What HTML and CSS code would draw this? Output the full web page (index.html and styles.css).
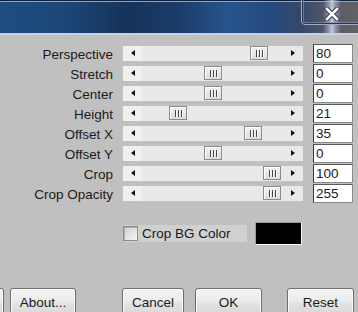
FILE: index.html
```html
<!DOCTYPE html>
<html>
<head>
<meta charset="utf-8">
<link rel="stylesheet" href="styles.css">
</head>
<body>
<div class="titlebar">
  <div class="glow"></div>
  <div class="close">
    <svg class="xicon" width="16" height="14" viewBox="0 0 16 14">
      <path d="M3 2 L13 12 M13 2 L3 12" stroke="#3a4256" stroke-width="4.6" stroke-linecap="square"/>
      <path d="M3 2 L13 12 M13 2 L3 12" stroke="#ffffff" stroke-width="2.6" stroke-linecap="square"/>
    </svg>
  </div>
</div>
<div class="params">
  <div class="lbl">Perspective</div>
  <div class="track"><span class="arr left"></span><span class="thumb" style="left:127px"><i></i><i></i><i></i></span><span class="arr right"></span></div>
  <div class="val">80</div>

  <div class="lbl">Stretch</div>
  <div class="track"><span class="arr left"></span><span class="thumb" style="left:81px"><i></i><i></i><i></i></span><span class="arr right"></span></div>
  <div class="val">0</div>

  <div class="lbl">Center</div>
  <div class="track"><span class="arr left"></span><span class="thumb" style="left:81px"><i></i><i></i><i></i></span><span class="arr right"></span></div>
  <div class="val">0</div>

  <div class="lbl">Height</div>
  <div class="track"><span class="arr left"></span><span class="thumb" style="left:46px"><i></i><i></i><i></i></span><span class="arr right"></span></div>
  <div class="val">21</div>

  <div class="lbl">Offset X</div>
  <div class="track"><span class="arr left"></span><span class="thumb" style="left:121px"><i></i><i></i><i></i></span><span class="arr right"></span></div>
  <div class="val">35</div>

  <div class="lbl">Offset Y</div>
  <div class="track"><span class="arr left"></span><span class="thumb" style="left:81px"><i></i><i></i><i></i></span><span class="arr right"></span></div>
  <div class="val">0</div>

  <div class="lbl">Crop</div>
  <div class="track"><span class="arr left"></span><span class="thumb" style="left:140px"><i></i><i></i><i></i></span><span class="arr right"></span></div>
  <div class="val">100</div>

  <div class="lbl">Crop Opacity</div>
  <div class="track"><span class="arr left"></span><span class="thumb" style="left:140px"><i></i><i></i><i></i></span><span class="arr right"></span></div>
  <div class="val">255</div>
</div>
<div class="bgrow">
  <div class="check"><span class="cbox"></span><span class="ctext">Crop BG Color</span></div>
  <div class="swatch"></div>
</div>
<div class="buttons">
  <div class="btn ghost"></div>
  <div class="btn about">About...</div>
  <div class="btn cancel">Cancel</div>
  <div class="btn ok">OK</div>
  <div class="btn reset">Reset</div>
</div>
</body>
</html>
```

FILE: styles.css
```css
* { box-sizing: border-box; }
html, body { margin: 0; padding: 0; }
body {
  background: #c0c0c0;
  font-family: "Liberation Sans", Arial, sans-serif;
  font-size: 13.5px;
  color: #1a1a1a;
  width: 358px;
  height: 312px;
  overflow: hidden;
}
.titlebar {
  position: relative;
  height: 35px;
  background: linear-gradient(90deg, #1f4c80 0%, #1d4778 18%, #163359 36%, #1b3d6a 50%, #27548d 64%, #24497c 76%, #364869 84%, #56596a 92%, #626265 100%);
  box-shadow: inset 0 1px 0 #0f2240, inset 0 2px 0 #8fa2c0, inset 0 -2px 0 #c9d1dd;
  overflow: hidden;
}
.glow {
  position: absolute;
  left: 323px;
  top: 0;
  width: 18px;
  height: 33px;
  background: linear-gradient(90deg, rgba(200,210,235,0) 0%, rgba(200,210,235,0.55) 35%, rgba(225,230,245,0.8) 50%, rgba(200,210,235,0.55) 65%, rgba(200,210,235,0) 100%);
}
.close {
  position: absolute;
  left: 301px;
  top: -6px;
  width: 70px;
  height: 31px;
  border: 1px solid #a3acbf;
  border-radius: 4px;
  box-shadow: inset 0 0 0 1px #2c3550, inset 0 0 0 2px rgba(140,150,175,0.6);
}
.xicon {
  position: absolute;
  left: 22px;
  top: 12px;
}
.params {
  margin-top: 9px;
  display: grid;
  grid-template-columns: 113px 180px 40px;
  grid-auto-rows: 20px;
  column-gap: 10px;
  align-items: start;
}
.lbl {
  text-align: right;
  line-height: 20px;
  padding-top: 1px;
  white-space: nowrap;
}
.track {
  position: relative;
  margin-top: 2px;
  height: 15px;
  background: linear-gradient(90deg, #f0f0f0 0px, #f0f0f0 18px, #e9e9e9 19px, #e9e9e9 100%);
}
.arr {
  position: absolute;
  top: 4px;
  width: 0;
  height: 0;
  border-top: 3.5px solid transparent;
  border-bottom: 3.5px solid transparent;
}
.arr.left { left: 8px; border-right: 4px solid #111; }
.arr.right { left: 168px; border-left: 4px solid #111; }
.thumb {
  position: absolute;
  top: 0;
  width: 18px;
  height: 14px;
  background: linear-gradient(#f2f2f2, #dcdcdc);
  border: 1px solid #8c8c8c;
  box-shadow: inset 1px 1px 0 #ffffff;
  display: flex;
  justify-content: center;
  align-items: center;
  gap: 2px;
}
.thumb i {
  display: block;
  width: 1px;
  height: 7px;
  background: #444;
  box-shadow: 1px 0 0 #ffffff;
}
.val {
  height: 19px;
  background: #ffffff;
  border: 1px solid #8a8a8a;
  border-left-color: #3a3a3a;
  border-top-color: #5a5a5a;
  padding-left: 2px;
  line-height: 18px;
}
.bgrow {
  margin-top: 18px;
  height: 23px;
  padding-left: 123px;
  display: flex;
  align-items: center;
}
.check {
  width: 124px;
  height: 17px;
  background: #d0d0d0;
  display: flex;
  align-items: center;
}
.cbox {
  width: 15px;
  height: 15px;
  border: 1px solid #8a8a8a;
  background: linear-gradient(135deg, #cfcfcf, #f4f4f4);
  box-shadow: inset 1px 1px 0 #b0b0b0;
}
.ctext {
  margin-left: 4px;
  line-height: 17px;
}
.swatch {
  margin-left: 8px;
  width: 47px;
  height: 23px;
  background: #000;
  border: 1px solid #f4f4f4;
  border-left-color: #9a9a9a;
  border-top-color: #9a9a9a;
}
.buttons {
  margin-top: 43px;
  display: flex;
}
.btn {
  flex: none;
  height: 28px;
  border: 1px solid #6f6f6f;
  border-radius: 3px;
  background: linear-gradient(#f4f4f4, #ececec 45%, #e2e2e2 55%, #d8d8d8);
  box-shadow: inset 0 0 0 1px #fbfbfb;
  text-align: center;
  line-height: 27px;
}
.ghost { width: 66px; margin-left: -62px; }
.about { width: 66px; margin-left: 6px; }
.cancel { width: 62px; margin-left: 46px; }
.ok { width: 67px; margin-left: 11px; }
.reset { width: 67px; margin-left: 25px; }
```
